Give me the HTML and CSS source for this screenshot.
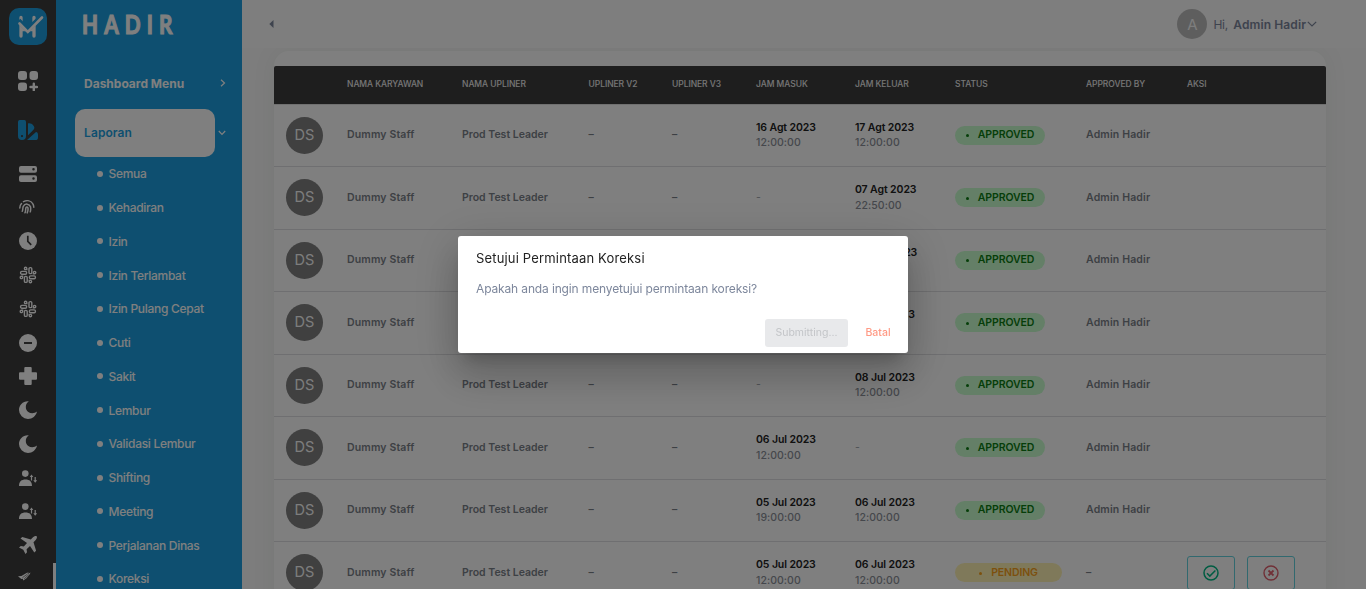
FILE: index.html
```html
<!DOCTYPE html>
<html lang="id">
<head>
<meta charset="utf-8">
<title>Hadir</title>
<link rel="stylesheet" href="styles.css">
</head>
<body>
<svg width="0" height="0" class="defs">
  <symbol id="slack" viewBox="0 0 18 18"><g fill="none" stroke="currentColor" stroke-width="1.400"><rect x="10" y="1.600" width="2.800" height="6" rx="1.200"/><rect x="5.400" y="10.400" width="2.800" height="6" rx="1.200"/><rect x="1.600" y="5.400" width="6" height="2.800" rx="1.200"/><rect x="10.400" y="9.900" width="6" height="2.800" rx="1.200"/><path d="M7.800 3.600H6.600a1.200 1.200 0 1 1 1.200-1.200zM14.400 7.800V6.600a1.200 1.200 0 1 1 1.200 1.200zM10.200 14.400h1.200a1.200 1.200 0 1 1-1.200 1.200zM3.600 10.200v1.200a1.200 1.200 0 1 1-1.200-1.200z"/></g></symbol>
  <symbol id="moon" viewBox="0 0 18 18"><path fill="currentColor" d="M9.800.2C3.900-.3 0 4 0 9a9 9 0 0 0 9 9c4.500 0 8-2.800 9-7.400C15.500 12.500 12 13 9.300 11 5.800 8.500 6 2.800 9.800.2z"/></symbol>
  <symbol id="shift" viewBox="0 0 18 18"><g fill="currentColor"><circle cx="6.300" cy="4.600" r="3.300"/><path d="M0 17c0-4.500 2.500-6.500 6.500-6.500s6.500 2 6.500 6.500zM12.500 5.500l1.800 2.400h-1.200V11.500h-1.200V7.900h-1.200zM16.200 13.700l-1.900-2.400h1.300V8h1.200v3.300h1.300z"/></g></symbol>
  <symbol id="ok" viewBox="0 0 16 16"><g fill="none" stroke="#00b884" stroke-width="1.500"><circle cx="8" cy="8" r="7"/><path d="M4 8.300l2.800 2.800 5.600-5.600"/></g></symbol>
  <symbol id="no" viewBox="0 0 16 16"><g fill="none" stroke="#e0606e" stroke-width="1.400"><circle cx="8" cy="8" r="7"/><path stroke-width="1.800" d="M5.500 5.500l5 5m0-5l-5 5"/></g></symbol>
</svg>
<div class="app">
  <nav class="rail">
    <div class="logo"><svg width="38" height="37" viewBox="0 0 38 37"><g fill="none" stroke="#fff" stroke-linecap="round"><path stroke-width="3.300" d="M12 9.500v18.500M25 9.500v18.500M12 21.500h13"/><path stroke="#1d9fe0" stroke-width="5" stroke-linecap="butt" d="M9.500 12.500l9.300 9.300L33 8"/><path stroke-width="2.600" d="M10.500 15.500l8.300 8.300L33 9.500"/></g></svg></div>
    <div class="big apps"><svg width="20" height="20" viewBox="0 0 20 20"><g fill="currentColor"><rect width="9" height="9" rx="3"/><rect x="11.500" width="8.500" height="9" rx="3"/><rect y="11.500" width="9" height="8.500" rx="3"/></g><path d="M15.800 12.700v6.500M12.500 16h6.500" stroke="currentColor" stroke-width="2.400" stroke-linecap="round"/></svg></div>
    <div class="big active"><svg width="20" height="20" viewBox="0 0 20 20"><path fill="currentColor" fill-rule="evenodd" d="M2.500 0h3A2.300 2.300 0 0 1 8 2.500V16a4 4 0 0 1-8 0V2.500A2.300 2.300 0 0 1 2.500 0zM4 15a1.100 1.100 0 1 0 0 2.200A1.100 1.100 0 0 0 4 15zM10 3.500c2-.5 4 .3 5.500 2.200 1.400 1.800 1 3-.5 4.500l-5 5zM18 12c1.300.3 2 1 2 3v2.500c0 2-1 2.500-2.500 2.500H9z"/></svg></div>
    <div class="tick"><svg width="18" height="16" viewBox="0 0 18 16"><path fill="currentColor" fill-rule="evenodd" d="M2 0h14a2 2 0 0 1 2 2v2.800a2 2 0 0 1-2 2H2a2 2 0 0 1-2-2V2a2 2 0 0 1 2-2zm12.500 2a1.200 1.200 0 1 0 0 2.500 1.200 1.200 0 0 0 0-2.500zM2 9.200h14a2 2 0 0 1 2 2V14a2 2 0 0 1-2 2H2a2 2 0 0 1-2-2v-2.800a2 2 0 0 1 2-2zm12.500 2a1.200 1.200 0 1 0 0 2.500 1.200 1.200 0 0 0 0-2.500z"/></svg></div>
    <div class="tick finger"><svg width="16" height="14" viewBox="0 0 16 14"><g fill="none" stroke="currentColor" stroke-width="1.500" stroke-linecap="round"><path d="M4.500 1.700C8 0 12 .4 14 4.200c.5 1 .7 2 .8 3M.8 8c0-2 .5-3.300 1.700-4.500M3.300 11.300c.7-1.500.3-3.600 1-5 1.700-3.300 6.200-2.600 7.200.5.300 1.300.2 3.300-.2 5M6 12.800c.9-2 .5-4 1-5.300.5-.9 1.600-.8 1.900.2.300 1.600 0 3.600-.7 5.200"/></g></svg></div>
    <div class="tick"><svg width="18" height="18" viewBox="0 0 18 18"><circle cx="9" cy="9" r="9" fill="currentColor"/><path d="M8.800 3.800V9.300l3.400 3.500" fill="none" stroke="#3c3c3c" stroke-width="1.700"/></svg></div>
    <div class="tick"><svg width="18" height="18"><use href="#slack"/></svg></div>
    <div class="tick"><svg width="18" height="18"><use href="#slack"/></svg></div>
    <div class="tick"><svg width="18" height="18" viewBox="0 0 18 18"><circle cx="9" cy="9" r="9" fill="currentColor"/><path d="M5 9h8" stroke="#3c3c3c" stroke-width="1.900"/></svg></div>
    <div class="tick"><svg width="18" height="18" viewBox="0 0 18 18"><path fill="currentColor" d="M6.300 0h5.400q1 0 1 1v4.300H17q1 0 1 1v5.400q0 1-1 1h-4.300V17q0 1-1 1H6.300q-1 0-1-1v-4.300H1q-1 0-1-1V6.300q0-1 1-1h4.300V1q0-1 1-1z"/></svg></div>
    <div class="tick"><svg width="18" height="18"><use href="#moon"/></svg></div>
    <div class="tick"><svg width="18" height="18"><use href="#moon"/></svg></div>
    <div class="tick"><svg width="18" height="18"><use href="#shift"/></svg></div>
    <div class="tick"><svg width="18" height="18"><use href="#shift"/></svg></div>
    <div class="tick"><svg width="18" height="18" viewBox="0 0 18 18"><path fill="currentColor" d="M17.600.3c-1-.8-2.600 0-3.600 1l-2.200 2.200L3.300.9 1.500 2.600 8 7 4.800 10.500 1.800 10 0 11.500l4.300 2.200L6.500 18 8 16.300l-.4-3L11 10l4.300 6.500 1.800-1.800-2.600-8.500 2.200-2.200C18 2.700 18.300 1 17.600.3z"/></svg></div>
    <div class="tick wing"><svg width="14" height="9" viewBox="0 0 14 9"><path fill="currentColor" d="M0 4.300l3.400-.3L9 .8l1.800-.3-2 1.900L12.500.6l-.6 1.400-3.400 4.300L5.300 8.600 4.800 6.800 3.300 6.900z"/><path d="M4.500 5.600L9.300 2.200M6.200 6.800L10.800 2.700" stroke="#3c3c3c" stroke-width=".6"/></svg></div>
    <div class="thumb"></div>
  </nav>
  <aside class="menu">
    <div class="brand">HADIR</div>
    <div class="group"><span>Dashboard Menu</span><svg width="6" height="8" viewBox="0 0 6 8"><path d="M1 .8L4.500 4 1 7.200" fill="none" stroke="#fff" stroke-width="1.200"/></svg></div>
    <div class="section"><div class="current">Laporan</div><svg width="8" height="6" viewBox="0 0 8 6"><path d="M.8 1L4 4.300 7.200 1" fill="none" stroke="#fff" stroke-width="1.200"/></svg></div>
    <ul class="items">
      <li>Semua</li><li>Kehadiran</li><li>Izin</li><li>Izin Terlambat</li><li>Izin Pulang Cepat</li><li>Cuti</li><li>Sakit</li><li>Lembur</li><li>Validasi Lembur</li><li>Shifting</li><li>Meeting</li><li>Perjalanan Dinas</li><li>Koreksi</li>
    </ul>
  </aside>
  <main class="page">
    <header class="top">
      <svg width="5" height="8" viewBox="0 0 5 8"><path fill="#7d879c" d="M4.500 0v8L.3 4z"/></svg>
      <div class="user"><span class="initial">A</span><span class="hi">Hi,</span><b>Admin Hadir</b><svg width="10" height="6" viewBox="0 0 10 6"><path d="M.8.800L5 5 9.200.8" fill="none" stroke="#7d879c" stroke-width="1.200"/></svg></div>
    </header>
    <section class="card">
      <div class="row head"><span></span><span>NAMA KARYAWAN</span><span>NAMA UPLINER</span><span>UPLINER V2</span><span>UPLINER V3</span><span>JAM MASUK</span><span>JAM KELUAR</span><span>STATUS</span><span>APPROVED BY</span><span>AKSI</span></div>
      <div class="row"><span class="ds">DS</span><span>Dummy Staff</span><span class="lead">Prod Test Leader</span><span>–</span><span>–</span><div class="when"><b>16 Agt 2023</b><i>12:00:00</i></div><div class="when"><b>17 Agt 2023</b><i>12:00:00</i></div><div class="pill">APPROVED</div><span>Admin Hadir</span></div>
      <div class="row"><span class="ds">DS</span><span>Dummy Staff</span><span class="lead">Prod Test Leader</span><span>–</span><span>–</span><span class="none">-</span><div class="when"><b>07 Agt 2023</b><i>22:50:00</i></div><div class="pill">APPROVED</div><span>Admin Hadir</span></div>
      <div class="row"><span class="ds">DS</span><span>Dummy Staff</span><span></span><span></span><span></span><span></span><div class="when single"><b>05 Agt 2023</b></div><div class="pill">APPROVED</div><span>Admin Hadir</span></div>
      <div class="row"><span class="ds">DS</span><span>Dummy Staff</span><span></span><span></span><span></span><span></span><div class="when single"><b>09 Jul 2023</b></div><div class="pill">APPROVED</div><span>Admin Hadir</span></div>
      <div class="row"><span class="ds">DS</span><span>Dummy Staff</span><span class="lead">Prod Test Leader</span><span>–</span><span>–</span><span class="none">-</span><div class="when"><b>08 Jul 2023</b><i>12:00:00</i></div><div class="pill">APPROVED</div><span>Admin Hadir</span></div>
      <div class="row"><span class="ds">DS</span><span>Dummy Staff</span><span class="lead">Prod Test Leader</span><span>–</span><span>–</span><div class="when"><b>06 Jul 2023</b><i>12:00:00</i></div><span class="none">-</span><div class="pill">APPROVED</div><span>Admin Hadir</span></div>
      <div class="row"><span class="ds">DS</span><span>Dummy Staff</span><span class="lead">Prod Test Leader</span><span>–</span><span>–</span><div class="when"><b>05 Jul 2023</b><i>19:00:00</i></div><div class="when"><b>06 Jul 2023</b><i>12:00:00</i></div><div class="pill">APPROVED</div><span>Admin Hadir</span></div>
      <div class="row"><span class="ds">DS</span><span>Dummy Staff</span><span class="lead">Prod Test Leader</span><span>–</span><span>–</span><div class="when"><b>05 Jul 2023</b><i>12:00:00</i></div><div class="when"><b>06 Jul 2023</b><i>12:00:00</i></div><div class="pill pending">PENDING</div><span>–</span><div class="acts"><button><svg width="16" height="16"><use href="#ok"/></svg></button><button><svg width="16" height="16"><use href="#no"/></svg></button></div></div>
    </section>
  </main>
</div>
<div class="overlay">
  <div class="dialog">
    <h2>Setujui Permintaan Koreksi</h2>
    <p>Apakah anda ingin menyetujui permintaan koreksi?</p>
    <div class="buttons"><button class="submit" disabled>Submitting...</button><button class="cancel">Batal</button></div>
  </div>
</div>
</body>
</html>
```
FILE: styles.css
```css
* { box-sizing: border-box; }
body { margin: 0; height: 589px; overflow: hidden; font-family: Inter, "Liberation Sans", sans-serif; background: #fafafa; }
button { font: inherit; background: none; border: 0; padding: 0; }
svg { display: block; flex: none; }
.defs { position: absolute; }
.app { display: flex; height: 589px; overflow: hidden; }

.rail { position: relative; width: 56px; flex: none; background: #3c3c3c; color: #fff; display: flex; flex-direction: column; align-items: center; padding-top: 8px; }
.logo { width: 38px; height: 37px; border-radius: 10px; background: #1d9fe0; margin-bottom: 26px; flex: none; }
.big { height: 20px; flex: none; }
.apps { margin-bottom: 29px; }
.active { color: #1d9fe0; margin-bottom: 17.100px; }
.tick { height: 33.750px; flex: none; display: flex; align-items: center; }
.finger { padding: 0 3px 2px 0; }
.wing { padding-right: 6px; padding-bottom: 4px; }
.thumb { position: absolute; right: 0; top: 563px; width: 3px; height: 40px; background: #fff; }

.menu { width: 186px; flex: none; background: #1d9fe0; color: #fff; }
.brand { height: 48px; margin-left: 25.500px; font: 700 26px/49px Lato, sans-serif; letter-spacing: 7.700px; -webkit-text-stroke: 1.200px #fff; transform: scaleX(.8); transform-origin: left; }
.group { height: 70px; padding: 0 16px 0 28px; display: flex; align-items: center; justify-content: space-between; font-size: 12px; font-weight: 700; }
.section { margin-top: -9px; height: 48px; padding: 0 16px 0 19px; display: flex; align-items: center; gap: 3px; }
.current { width: 140px; height: 48px; background: #fff; border-radius: 10px; color: #1d9fe0; font-size: 12px; font-weight: 600; line-height: 48px; padding-left: 9px; letter-spacing: .1px; }
.items { list-style: none; margin: 0; padding: 0 0 0 41px; font-size: 12px; font-weight: 500; letter-spacing: -.3px; }
.items li { height: 33.750px; display: flex; align-items: center; white-space: nowrap; }
.items li::before { content: ""; width: 6px; height: 6px; border-radius: 50%; background: #fff; margin-right: 5.500px; }

.page { flex: 1; min-width: 0; }
.top { position: relative; z-index: 1; height: 48px; background: #fcfcfc; padding: 0 49px 0 27px; display: flex; align-items: center; justify-content: space-between; }
.user { display: flex; align-items: center; color: #7d879c; font-size: 12px; }
.initial { width: 30px; height: 30px; border-radius: 50%; background: #bdbdbd; color: #fafafa; font-size: 15px; line-height: 31px; text-align: center; margin-right: 6px; }
.hi { margin-right: 5.500px; letter-spacing: -.3px; }
.user b { font-weight: 600; margin-right: 1px; letter-spacing: .1px; }

.card { margin: 3px 40px 0 32px; padding-top: 15px; height: 600px; background: #fff; border-radius: 15px; box-shadow: 0 0 26px rgba(20, 60, 40, .06); }
.row { height: 62.500px; display: grid; grid-template-columns: 61px 115px 126.500px 83.500px 84px 99px 100px 131px 101px 1fr; align-items: center; padding-left: 12px; border-bottom: 1px solid #dfdfe2; color: #7b8189; font-size: 10.500px; font-weight: 600; letter-spacing: .15px; }
.row > span { padding-bottom: 1px; white-space: nowrap; }
.row .lead { letter-spacing: 0; }
.row.head { height: 38.500px; background: #3c3c3c; color: #ededed; font-size: 8.500px; font-weight: 500; letter-spacing: -.05px; border-radius: 2px 2px 0 0; border-color: #e0e0e0; }
.row .ds { width: 37px; height: 37px; border-radius: 50%; background: #808080; color: #fafafa; font: 400 14.500px/35px Inter, sans-serif; text-align: center; letter-spacing: 0; padding: 0; }
.row .none { font-weight: 400; color: #9a9fa8; }
.when { line-height: 15.500px; letter-spacing: -.1px; }
.when.single { padding-bottom: 15.500px; }
.when b { display: block; color: #222; font-weight: 600; }
.when i { display: block; font-style: normal; font-weight: 500; color: #8b8f98; letter-spacing: .05px; }
.pill { width: 90px; height: 19px; border-radius: 10px; background: #c8ffcf; color: #0c7d12; font-size: 10.500px; line-height: 18px; font-weight: 600; letter-spacing: -.1px; display: flex; align-items: center; justify-content: center; gap: 9px; }
.pill::before { content: ""; width: 3px; height: 3px; border-radius: 50%; background: currentColor; margin-top: 1px; }
.pending { width: 107px; background: #fff3b5; color: #f9a11b; }
.acts { display: flex; gap: 12px; }
.acts button { width: 48px; height: 34px; border: 1px solid #63d3de; border-radius: 3px; display: flex; align-items: center; justify-content: center; }

.overlay { position: fixed; z-index: 10; inset: 0; background: rgba(0, 0, 0, .5); display: flex; align-items: center; justify-content: center; }
.dialog { width: 450px; height: 117px; background: #fff; border-radius: 3px; padding: 12px 7px 6px 18px; display: flex; flex-direction: column; box-shadow: 0 11px 15px -7px rgba(0,0,0,.2), 0 24px 38px 3px rgba(0,0,0,.14), 0 9px 46px 8px rgba(0,0,0,.12); }
.dialog h2 { margin: 0; font-size: 13px; font-weight: 400; line-height: 20px; color: #222; letter-spacing: .17px; }
.dialog p { margin: 11px 0 0; font-size: 12px; line-height: 20px; color: #7d879c; letter-spacing: -.14px; }
.buttons { margin-top: auto; display: flex; justify-content: flex-end; gap: 7px; font-size: 10.500px; line-height: 28px; }
.submit { width: 83px; height: 28px; border-radius: 3px; background: #e8e9eb; color: #c3c5c8; }
.cancel { width: 46px; height: 28px; color: #ff9a85; font-weight: 500; }
```
